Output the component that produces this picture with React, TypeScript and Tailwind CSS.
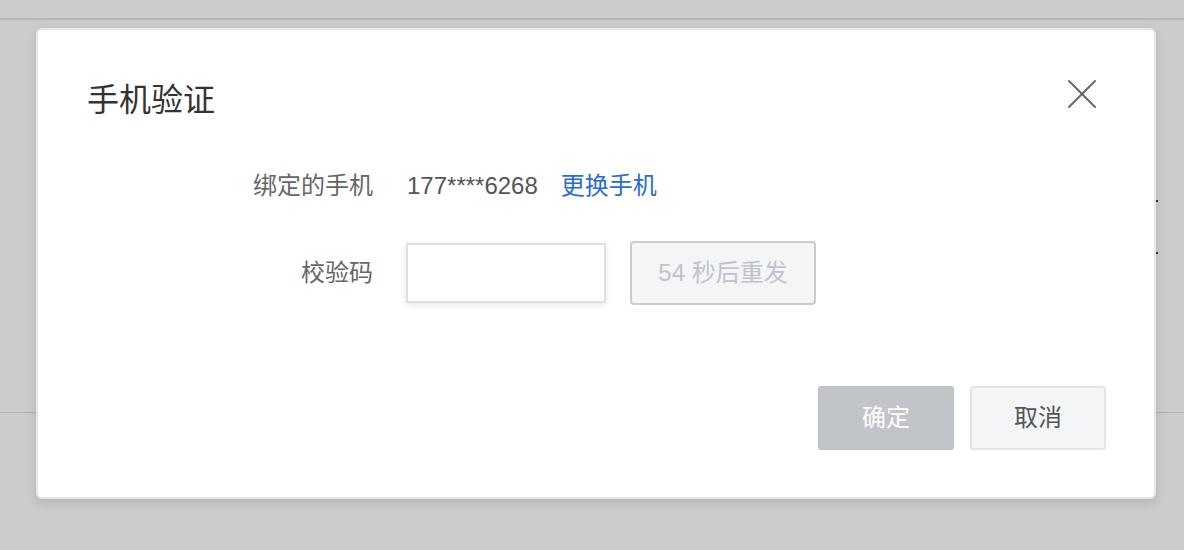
import { X } from "lucide-react";

export default function App() {
  return (
    <main
      className="relative h-[550px] w-[1184px] overflow-hidden bg-[#cccccc]"
      style={{ fontFamily: '"Liberation Sans", "Noto Sans CJK SC", sans-serif' }}
    >
      {/* page behind the modal */}
      <div className="mt-[18px] h-[2px] bg-[#b8b8b8]" />
      <div className="mt-[392px] h-[1px] bg-[#b3b3b3]" />
      <div className="absolute left-[1156px] top-[200px] h-[2px] w-[2px] bg-[#333]" />
      <div className="absolute left-[1156px] top-[252px] h-[2px] w-[2px] bg-[#333]" />

      {/* modal */}
      <div className="absolute left-[36px] top-[28px] flex h-[471px] w-[1120px] flex-col rounded-[6px] border-2 border-[#e6e6e6] bg-white shadow-[0_4px_12px_rgba(0,0,0,0.12)]">
        <div className="flex items-start justify-between pl-[49px] pr-[46px] pt-[50px]">
          <h1 className="text-[32px] leading-[40px] text-[#333]">手机验证</h1>
          <button className="-mt-[12px] text-[#666]">
            <X size={52} strokeWidth={2} absoluteStrokeWidth />
          </button>
        </div>

        <div className="mt-[48px] grid grid-cols-[335px_1fr] items-center gap-x-[34px] gap-y-[37px] text-[24px]">
          <span className="text-right text-[#666]">绑定的手机</span>
          <div className="flex items-center gap-[23px]">
            <span className="text-[#555]">177****6268</span>
            <a className="text-[#2b6cd0]">更换手机</a>
          </div>

          <span className="text-right text-[#666]">校验码</span>
          <div className="-ml-[1px] flex items-center gap-[24px]">
            <input className="h-[60px] w-[200px] border-2 border-[#e0e0e0] bg-white shadow-[0_2px_6px_rgba(0,0,0,0.1)] outline-none" />
            <button className="h-[64px] w-[186px] rounded-[4px] border-2 border-[#c9ccd0] bg-[#f4f5f7] text-[24px] text-[#c0c4cc]">
              54 秒后重发
            </button>
          </div>
        </div>

        <div className="mt-auto flex justify-end gap-[16px] pb-[47px] pr-[48px]">
          <button className="h-[64px] w-[136px] rounded-[3px] bg-[#c1c5ca] text-[24px] text-white">确定</button>
          <button className="h-[64px] w-[136px] rounded-[3px] border-2 border-[#e3e4e6] bg-[#f4f5f7] text-[24px] text-[#555]">
            取消
          </button>
        </div>
      </div>
    </main>
  );
}
